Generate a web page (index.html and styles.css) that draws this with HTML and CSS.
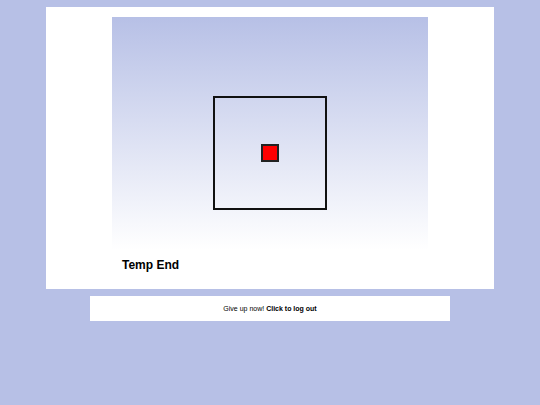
FILE: index.html
```html
<!DOCTYPE html>
<html>
<head>
<meta charset="utf-8">
<link rel="stylesheet" href="styles.css">
</head>
<body>
<div class="panel">
  <div class="stage">
    <div class="frame">
      <div class="dot"></div>
    </div>
  </div>
  <h2 class="title">Temp End</h2>
</div>
<div class="footer">Give up now! <b>Click to log out</b></div>
</body>
</html>
```
FILE: styles.css
```css
html, body {
  margin: 0;
  padding: 0;
}
body {
  background: #b7c0e6;
  font-family: "Liberation Sans", Arial, sans-serif;
  padding-top: 7px;
}
.panel {
  width: 448px;
  height: 282px;
  margin: 0 auto;
  background: #fff;
  padding-top: 10px;
  box-sizing: border-box;
}
.stage {
  width: 316px;
  height: 233px;
  margin: 0 auto;
  background: linear-gradient(#b7c0e6, #ffffff);
  padding-top: 79px;
  box-sizing: border-box;
}
.frame {
  width: 114px;
  height: 114px;
  margin: 0 auto;
  border: 2px solid #111;
  box-sizing: border-box;
  display: flex;
  align-items: center;
  justify-content: center;
}
.dot {
  width: 18px;
  height: 18px;
  background: #f00;
  border: 2px solid #222;
  box-sizing: border-box;
}
.title {
  margin: 8px 0 0 76px;
  font-size: 12px;
  font-weight: bold;
  line-height: 14px;
  color: #000;
}
.footer {
  width: 360px;
  height: 25px;
  margin: 7px auto 0;
  background: #fff;
  font-size: 7px;
  line-height: 25px;
  text-align: center;
  color: #000;
}
```
